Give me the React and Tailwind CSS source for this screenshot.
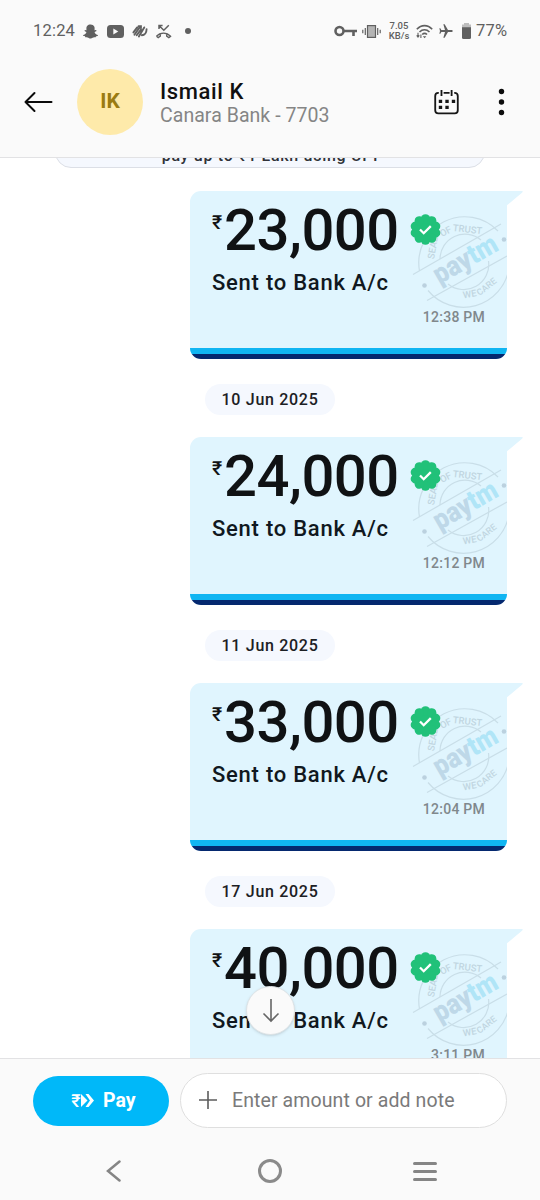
import React from 'react';
import { FaSnapchatGhost } from 'react-icons/fa';
import { MdAirplanemodeActive } from 'react-icons/md';

const transactions = [
    { id: 1, amount: '23,000', time: '12:38 PM', nextDate: '10 Jun 2025' },
    { id: 2, amount: '24,000', time: '12:12 PM', nextDate: '11 Jun 2025' },
    { id: 3, amount: '33,000', time: '12:04 PM', nextDate: '17 Jun 2025' },
    { id: 4, amount: '40,000', time: '3:11 PM' },
];

const StatusBar = () => (
    <div className="flex h-[62px] items-center pl-[33px] pr-[32px] text-[#606060]">
        <span className="w-[43px] whitespace-nowrap text-[16.5px] tracking-[0.2px]">12:24</span>
        <FaSnapchatGhost className="ml-[7px] h-[15px] w-[15px]" />
        <svg className="ml-[9px] h-[13px] w-[17px]" viewBox="0 0 17 13">
            <rect width="17" height="13" rx="3.5" fill="currentColor" />
            <path d="M6.3 3.5v6l5-3z" fill="#fafafa" />
        </svg>
        <svg className="ml-[8px] h-[14px] w-[16px]" viewBox="0 0 17 14" fill="none" stroke="currentColor" strokeWidth="2" strokeLinecap="round">
            <path d="M1.5 8.5 5.5 3.2M2.6 11 8.5 2.6M5 11.5 9.5 5.5M7.3 12.8 13 3.2M10.5 11.5c3 0 5-3 5-6.500M7 2h2.500v2" />
        </svg>
        <svg className="ml-[7px] h-[15px] w-[17px]" viewBox="0 0 17 15" fill="none" stroke="currentColor" strokeWidth="1.5">
            <path d="M4 5V1.5h3.6M4 1.5l4.8 4.7 5-5" />
            <path d="M1.5 12.3c3.7-4.2 10.3-4.2 14 0l-1.7 1.3-2.1-1.4v-2M1.5 12.3l1.7 1.3 2.1-1.4v-2" strokeWidth="1.4" />
        </svg>
        <span className="ml-[13px] h-[6px] w-[6px] rounded-full bg-[#606060]" />

        <div className="ml-auto flex items-center">
            <svg className="h-[12px] w-[23px]" viewBox="0 0 23 12" fill="none" stroke="currentColor" strokeWidth="2.600">
                <circle cx="5.500" cy="6" r="4" />
                <path d="M9.500 6H23M19.500 6v5" />
            </svg>
            <svg className="ml-[5px] h-[13px] w-[19px]" viewBox="0 0 19 13" fill="none" stroke="currentColor">
                <rect x="5.5" y=".6" width="8" height="11.8" fill="#b4b4b4" strokeWidth="1.2" />
                <path d="M3.3 3v7M.8 4.7v3.6M15.7 3v7M18.2 4.7v3.6" strokeWidth="1.2" />
            </svg>
            <div className="ml-[7px] w-[22px] text-center text-[9.5px] font-medium leading-[10px]">
                <div className="whitespace-nowrap">7.05</div>
                <div className="whitespace-nowrap">KB/s</div>
            </div>
            <svg className="ml-[6px] h-[15px] w-[17px]" viewBox="0 0 17 15" fill="none" stroke="currentColor" strokeWidth="1.6">
                <path d="M.8 5.2c4.5-4.8 11-4.8 15.4 0M3.5 8c3-3 7-3 10 0M6.2 10.5c1.5-1.4 3.3-1.4 4.8 0" />
                <path d="M6.8 12.3h3.5l-1.7 2z" fill="currentColor" stroke="none" />
                <path d="M2 8.8v4M.7 11.3 2 13l1.3-1.7M4.9 14v-3.6" strokeWidth="1.1" />
            </svg>
            <MdAirplanemodeActive className="ml-[5px] h-[16px] w-[16px] rotate-90" />
            <svg className="ml-[8px] h-[16px] w-[9px]" viewBox="0 0 9 16">
                <path d="M2 0h5v1.5h2V5H0V1.5h2z" fill="#bdbdbd" />
                <path d="M0 4.2h9V14.500q0 1.500-1.500 1.500h-6Q0 16 0 14.500z" fill="currentColor" />
            </svg>
            <span className="ml-[5px] w-[32px] whitespace-nowrap text-[16.5px] tracking-[0.2px]">77%</span>
        </div>
    </div>
);

const Header = () => (
    <header className="h-[158px] shrink-0 border-b-[1.5px] border-[#e2e2e4] bg-[#fafafa]">
        <StatusBar />
        <div className="flex h-[80px] items-center pl-[24px]">
            <svg className="h-[22px] w-[29px]" viewBox="0 0 29 22" fill="none" stroke="#0a0a0a" strokeWidth="2" strokeLinecap="round" strokeLinejoin="round">
                <path d="M27.500 11H1.500M10.500 2 1.500 11l9 9" />
            </svg>
            <div className="ml-[24px] flex h-[66px] w-[66px] items-center justify-center rounded-full bg-[#feeaaa] text-[21px] font-bold text-[#9a7b12]">
                IK
            </div>
            <div className="ml-[17px] mt-[2px] w-[270px]">
                <h1 className="text-[22px] font-medium leading-[25px] tracking-[0.6px] text-[#101010]">Ismail K</h1>
                <p className="text-[19.5px] leading-[24px] tracking-[0.05px] text-[#858585]">Canara Bank - 7703</p>
            </div>
            <svg className="ml-[3px] h-[27px] w-[27px]" viewBox="0 0 27 28" fill="none" stroke="#161616" strokeWidth="1.900">
                <path d="M5.500 4H5a3.200 3.200 0 0 0-3.200 3.200V22A3.200 3.200 0 0 0 5 25.200h17a3.200 3.200 0 0 0 3.200-3.200V7.200A3.200 3.200 0 0 0 22 4h-.5M10.500 4h6.200M8.300 1v6.300M18.800 1v6.300" />
                <path d="M5.500 12.800H9M12.300 12.800h3.500M19 12.800h3.500M5.500 19H9M12.300 19h3.500" strokeWidth="3.500" />
            </svg>
            <svg className="ml-[38px] h-[28px] w-[7px]" viewBox="0 0 7 28" fill="#0c0c0c">
                <circle cx="3.500" cy="3.500" r="2.700" />
                <circle cx="3.500" cy="14" r="2.700" />
                <circle cx="3.500" cy="24.500" r="2.700" />
            </svg>
        </div>
    </header>
);

// Watermark stamp, cropped by the right edge of the card
const TrustSeal = () => (
    <svg className="absolute right-0 top-[20px] h-[100px] w-[97px]" viewBox="410 211 97 100" fill="none">
        <g stroke="#c9dee8" strokeWidth="1.200">
            <path d="M419.500 271A46 46 0 0 1 498 231M428 290.500A46 46 0 0 0 509 268" />
            <path d="M440 259A25 25 0 0 1 481 240M448 284A25 25 0 0 0 488.500 261" />
            <path d="M413 274.500 501 224M427 300.500 507 256" />
        </g>
        <g fill="#c0d6e1" fontSize="9.500" fontWeight="500">
            <text transform="translate(434 259.500) rotate(-80)">SEAL</text>
            <text transform="translate(442 237) rotate(-28)">OF</text>
            <text transform="translate(452.500 231) rotate(6)">TRUST</text>
            <text transform="translate(463.500 298.500) rotate(-10)">WE</text>
            <text transform="translate(479.500 296) rotate(-38)" fontSize="9">CARE</text>
        </g>
        <circle cx="424.500" cy="285.500" r="2.300" fill="#bbd1df" />
        <circle cx="504" cy="239.500" r="2.300" fill="#bbd1df" />
        <text transform="translate(439.500 284.500) rotate(-30)" fontSize="28" fontWeight="900" textLength="70" lengthAdjust="spacingAndGlyphs" fill="#bed8e8">
            pay<tspan fill="#b0e5f7">tm</tspan>
        </text>
    </svg>
);

const VerifiedBadge = () => (
    <svg className="absolute left-[220px] top-[23px] h-[31px] w-[31px]" viewBox="-15.500 -15.500 31 31">
        <g fill="#21c179">
            <circle r="13" />
            {[0, 36, 72, 108, 144, 180, 216, 252, 288, 324].map((deg) => (
                <circle key={deg} cy="-10.600" r="4.700" transform={`rotate(${deg})`} />
            ))}
        </g>
        <path d="M-5.500 0-1.800 3.700 5.300-3.400" fill="none" stroke="#fff" strokeWidth="2.300" />
    </svg>
);

const PaymentCard = ({ amount, time }) => (
    <article className="relative ml-[190px] h-[168px] w-[317px] shrink-0">
        <div className="flex h-full flex-col overflow-hidden rounded-b-[11px] rounded-tl-[11px] bg-[#e0f5fe]">
            <div className="h-[157px] pl-[22px] pt-[8px]">
                <div className="flex text-[#101214]">
                    <span className="w-[12px] pt-[13px] text-[19.5px] font-medium leading-[22px]">₹</span>
                    <span className="text-[58px] font-medium leading-[62px] tracking-[-0.5px]">{amount}</span>
                </div>
                <p className="mt-[8px] text-[22px] font-medium leading-[28px] tracking-[0.75px] text-[#101820]">
                    Sent to Bank A/c
                </p>
                <p className="mr-[22px] mt-[10px] text-right text-[14px] font-medium leading-[20px] tracking-[0.25px] text-[#80888c]">
                    {time}
                </p>
            </div>
            <div className="h-[6px] bg-[#10b5f2]" />
            <div className="h-[5px] bg-[#04286f]" />
        </div>
        <TrustSeal />
        <VerifiedBadge />
        <svg className="absolute left-[316px] top-0 h-[16px] w-[18px]" viewBox="0 0 18 16">
            <path d="M0 0h15.500q2.500 0 .5 1.700L1 14.300V16H0z" fill="#e0f5fe" />
        </svg>
    </article>
);

const DateChip = ({ children }) => (
    <div className="mb-[22px] ml-[205px] mt-[25px] flex h-[31px] w-[130px] shrink-0 items-center justify-center rounded-full bg-[#f5f8fe] text-[16px] font-medium tracking-[0.7px] text-[#1c2024]">
        {children}
    </div>
);

const ChatFeed = () => (
    <main className="relative h-[900px] shrink-0 overflow-hidden bg-white">
        <div className="-mt-[30px] mx-auto mb-[23px] flex h-[40px] w-[430px] items-end justify-center rounded-[16px] border-[1.5px] border-[#dcdfe6] bg-[#f5f8fe] pb-[2px]">
            <p className="whitespace-nowrap text-[16px] font-medium leading-[18px] tracking-[0.7px] text-[#303238]">
                pay up to ₹1 Lakh using UPI
            </p>
        </div>
        <div className="flex flex-col">
            {transactions.map((item) => (
                <React.Fragment key={item.id}>
                    <PaymentCard amount={item.amount} time={item.time} />
                    {item.nextDate && <DateChip>{item.nextDate}</DateChip>}
                </React.Fragment>
            ))}
        </div>
        <button className="absolute left-[246px] top-[828px] flex h-[49px] w-[49px] items-center justify-center rounded-full border border-[#dde3e6] bg-[#fafafa] shadow-sm">
            <svg className="h-[24px] w-[18px]" viewBox="0 0 18 24" fill="none" stroke="#666" strokeWidth="1.600">
                <path d="M9 0v22M1.500 14.500 9 22l7.500-7.500" />
            </svg>
        </button>
    </main>
);

const PayBar = () => (
    <div className="flex h-[84px] items-center border-t-[1.5px] border-[#e2e2e4] pl-[33px]">
        <button className="flex h-[50px] w-[136px] items-center rounded-full bg-[#00b8f9] pl-[37px] text-white">
            <span className="w-[12px] text-[18px] font-medium">₹</span>
            <svg className="-ml-px h-[13px] w-[13px]" viewBox="0 0 13 13" fill="currentColor">
                <path d="M0 0 6.500 6.500 0 13z" />
                <path d="M4.500 0h3l5.500 6.500-5.500 6.500h-3l4.500-6.500z" />
            </svg>
            <span className="ml-[9px] text-[19.5px] font-bold">Pay</span>
        </button>
        <div className="mb-px ml-[11px] flex h-[55px] w-[327px] items-center rounded-full border-[1.5px] border-[#dfdfdf] bg-white pl-[18px]">
            <svg className="h-[18px] w-[18px]" viewBox="0 0 18 18" stroke="#5c5c5c" strokeWidth="1.600">
                <path d="M9 0v18M0 9h18" />
            </svg>
            <span className="ml-[15px] mt-px whitespace-nowrap text-[19.5px] tracking-[0.1px] text-[#7a7a7a]">
                Enter amount or add note
            </span>
        </div>
    </div>
);

const NavigationBar = () => (
    <nav className="flex h-[58px] items-center pl-[106px] text-[#858585]">
        <svg className="h-[22px] w-[15px]" viewBox="0 0 15 22" fill="none" stroke="currentColor" strokeWidth="2.500" strokeLinecap="round">
            <path d="M13.500 1.500 2 11l11.500 9.500" />
        </svg>
        <span className="ml-[137px] h-[24px] w-[24px] rounded-full border-[3px] border-[#8a8a8a]" />
        <div className="ml-[131px] flex w-[24px] flex-col gap-[5px]">
            <span className="h-[3px] rounded-full bg-[#858585]" />
            <span className="h-[3px] rounded-full bg-[#858585]" />
            <span className="h-[3px] rounded-full bg-[#858585]" />
        </div>
    </nav>
);

const App = () => {
    return (
        <div className="flex h-[1200px] w-[540px] flex-col overflow-hidden bg-[#fafafa] font-[Roboto,'Noto_Sans',sans-serif]">
            <Header />
            <ChatFeed />
            <footer className="h-[142px]">
                <PayBar />
                <NavigationBar />
            </footer>
        </div>
    );
};

export default App;
